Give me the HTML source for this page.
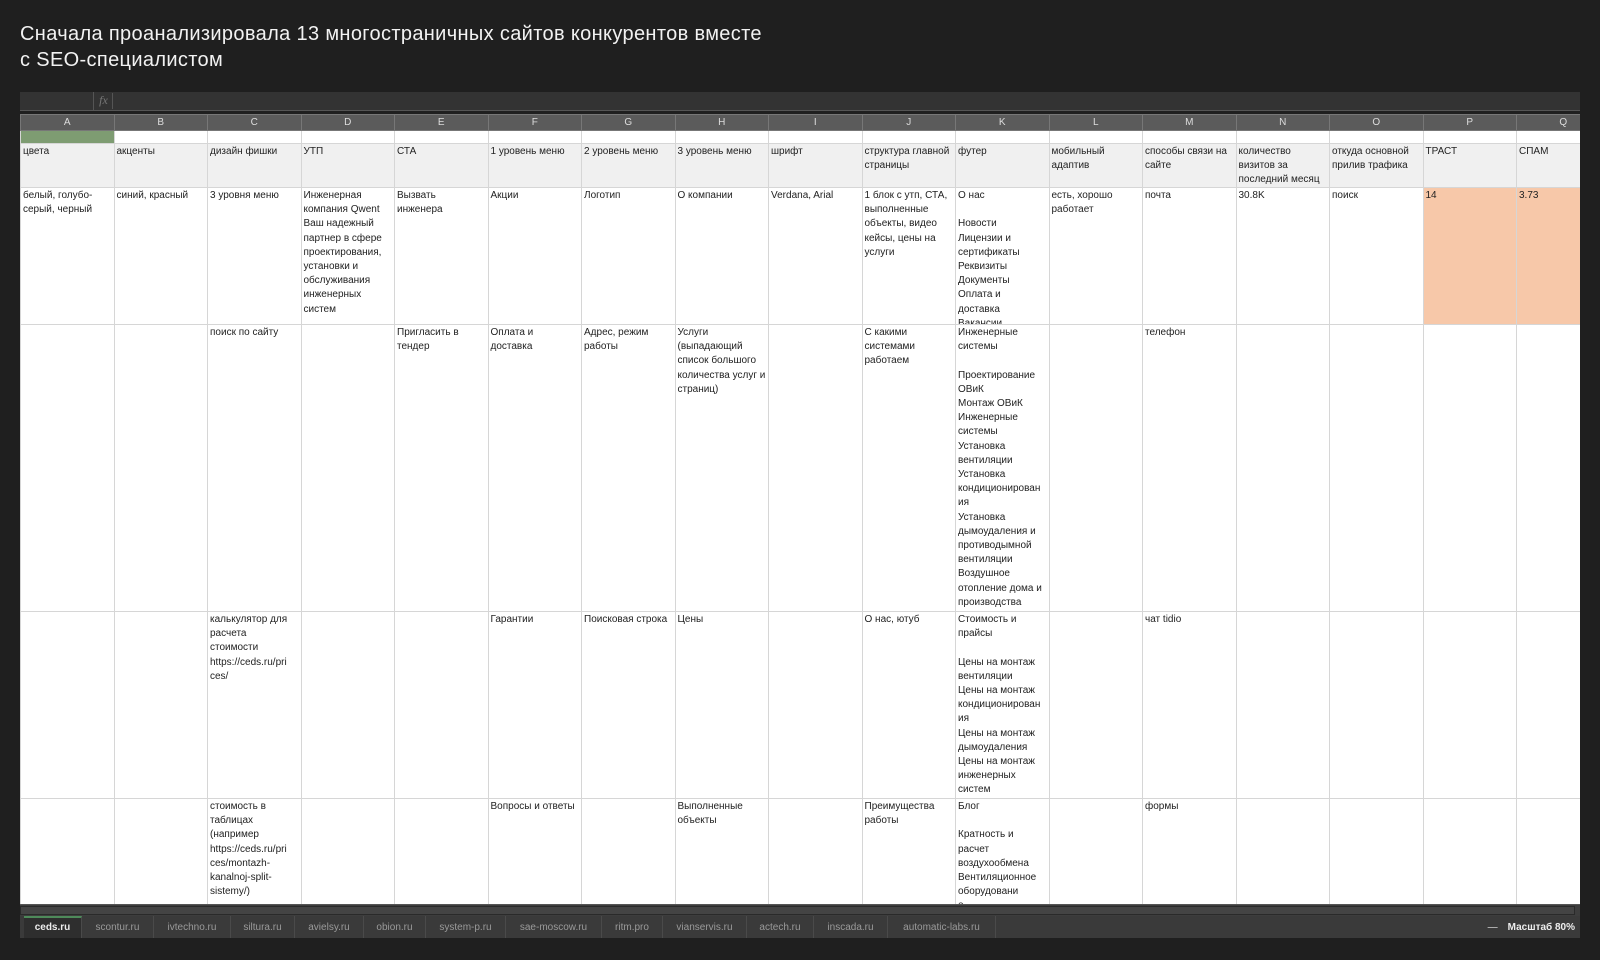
<!DOCTYPE html>
<html><head><meta charset="utf-8"><style>
*{margin:0;padding:0;box-sizing:border-box}
body{width:1600px;height:960px;background:#1f1f1f;position:relative;overflow:hidden;font-family:"Liberation Sans","DejaVu Sans",sans-serif}
.title{position:absolute;left:20px;top:21px;color:#f2f2f2;font-size:20px;line-height:26px;letter-spacing:0.35px}
.fbar{position:absolute;left:20px;top:92px;width:1560px;height:19px;background:#333;border-bottom:1px solid #555}
.nb{position:absolute;left:0;top:0;width:74px;height:18px;border-right:1px solid #555}
.fx{position:absolute;left:75px;top:1px;width:18px;height:16px;border-right:1px solid #555;color:#777;font:italic 12px "Liberation Serif",serif;text-align:center}
.sheet{position:absolute;left:20px;top:114px;width:1560px;height:790px;overflow:hidden;background:#fff}
table{border-collapse:collapse;table-layout:fixed;width:1589.5px}
td{width:93.5px;border:1px solid #d6d6d6;vertical-align:top;font-size:10px;line-height:14.2px;color:#222;padding:0;overflow:hidden}
td div{overflow:hidden;white-space:nowrap;padding:1px 0 0 2px}
tr.ch td{background:#5b5b5b;color:#ddd;text-align:center;height:16px;border-color:#777;font-size:10px;line-height:15px}
tr.r1 td{height:13px}
tr.r2 td{height:44px;background:#f0f0f0}tr.r2 td div{height:43px}
tr.r3 td{height:137px}tr.r3 td div{height:136px}
tr.r4 td{height:287px}tr.r4 td div{height:286px}
tr.r5 td{height:187px}tr.r5 td div{height:186px}
tr.r6 td{height:120px}tr.r6 td div{height:119px}
.pe{background:#f7c8a9!important}
.scroll{position:absolute;left:20px;top:904px;width:1560px;height:12px;background:#3d3d3d;border-top:1px solid #555}
.scroll i{position:absolute;left:0;top:1px;width:1555px;height:9px;background:#444;border:1px solid #2a2a2a}
.tabs{position:absolute;left:20px;top:916px;width:1560px;height:22px;background:#3a3a3a}
.tab{position:absolute;top:0;height:22px;border-right:1px solid #4a4a4a;color:#9a9a9a;font-size:10px;line-height:23px;text-align:center;background:#3a3a3a}
.tab.a{background:#2e2e2e;color:#eee;font-weight:bold;border-top:2px solid #4e8a5a;line-height:20px}
.zoom{position:absolute;right:25px;top:916px;color:#eee;font-size:10px;line-height:23px;font-weight:bold}
</style></head><body>
<div class="title">Сначала проанализировала 13 многостраничных сайтов конкурентов вместе<br>с SEO-специалистом</div>
<div class="fbar"><div class="nb"></div><div class="fx">fx</div></div>
<div class="sheet"><table>
<tr class="ch"><td>A</td><td>B</td><td>C</td><td>D</td><td>E</td><td>F</td><td>G</td><td>H</td><td>I</td><td>J</td><td>K</td><td>L</td><td>M</td><td>N</td><td>O</td><td>P</td><td>Q</td></tr>
<tr class="r1"><td style="background:#7e9c72"></td><td></td><td></td><td></td><td></td><td></td><td></td><td></td><td></td><td></td><td></td><td></td><td></td><td></td><td></td><td></td><td></td></tr>
<tr class="r2"><td><div>цвета</div></td><td><div>акценты</div></td><td><div>дизайн фишки</div></td><td><div>УТП</div></td><td><div>СТА</div></td><td><div>1 уровень меню</div></td><td><div>2 уровень меню</div></td><td><div>3 уровень меню</div></td><td><div>шрифт</div></td><td><div>структура главной<br>страницы</div></td><td><div>футер</div></td><td><div>мобильный<br>адаптив</div></td><td><div>способы связи на<br>сайте</div></td><td><div>количество<br>визитов за<br>последний месяц</div></td><td><div>откуда основной<br>прилив трафика</div></td><td><div>ТРАСТ</div></td><td><div>СПАМ</div></td></tr>
<tr class="r3"><td><div>белый, голубо-<br>серый, черный</div></td><td><div>синий, красный</div></td><td><div>3 уровня меню</div></td><td><div>Инженерная<br>компания Qwent<br>Ваш надежный<br>партнер в сфере<br>проектирования,<br>установки и<br>обслуживания<br>инженерных<br>систем</div></td><td><div>Вызвать<br>инженера</div></td><td><div>Акции</div></td><td><div>Логотип</div></td><td><div>О компании</div></td><td><div>Verdana, Arial</div></td><td><div>1 блок с утп, СТА,<br>выполненные<br>объекты, видео<br>кейсы, цены на<br>услуги</div></td><td><div>О нас<br><br>Новости<br>Лицензии и<br>сертификаты<br>Реквизиты<br>Документы<br>Оплата и<br>доставка<br>Вакансии</div></td><td><div>есть, хорошо<br>работает</div></td><td><div>почта</div></td><td><div>30.8K</div></td><td><div>поиск</div></td><td class="pe"><div>14</div></td><td class="pe"><div>3.73</div></td></tr>
<tr class="r4"><td></td><td></td><td><div>поиск по сайту</div></td><td></td><td><div>Пригласить в<br>тендер</div></td><td><div>Оплата и<br>доставка</div></td><td><div>Адрес, режим<br>работы</div></td><td><div>Услуги<br>(выпадающий<br>список большого<br>количества услуг и<br>страниц)</div></td><td></td><td><div>С какими<br>системами<br>работаем</div></td><td><div>Инженерные<br>системы<br><br>Проектирование<br>ОВиК<br>Монтаж ОВиК<br>Инженерные<br>системы<br>Установка<br>вентиляции<br>Установка<br>кондиционирован<br>ия<br>Установка<br>дымоудаления и<br>противодымной<br>вентиляции<br>Воздушное<br>отопление дома и<br>производства</div></td><td></td><td><div>телефон</div></td><td></td><td></td><td></td><td></td></tr>
<tr class="r5"><td></td><td></td><td><div>калькулятор для<br>расчета<br>стоимости<br>https://ceds.ru/pri<br>ces/</div></td><td></td><td></td><td><div>Гарантии</div></td><td><div>Поисковая строка</div></td><td><div>Цены</div></td><td></td><td><div>О нас, ютуб</div></td><td><div>Стоимость и<br>прайсы<br><br>Цены на монтаж<br>вентиляции<br>Цены на монтаж<br>кондиционирован<br>ия<br>Цены на монтаж<br>дымоудаления<br>Цены на монтаж<br>инженерных<br>систем</div></td><td></td><td><div>чат tidio</div></td><td></td><td></td><td></td><td></td></tr>
<tr class="r6"><td></td><td></td><td><div>стоимость в<br>таблицах<br>(например<br>https://ceds.ru/pri<br>ces/montazh-<br>kanalnoj-split-<br>sistemy/)</div></td><td></td><td></td><td><div>Вопросы и ответы</div></td><td></td><td><div>Выполненные<br>объекты</div></td><td></td><td><div>Преимущества<br>работы</div></td><td><div>Блог<br><br>Кратность и<br>расчет<br>воздухообмена<br>Вентиляционное<br>оборудовани<br>е</div></td><td></td><td><div>формы</div></td><td></td><td></td><td></td><td></td></tr>
</table></div>
<div class="scroll"><i></i></div>
<div class="tabs">
<div class="tab a" style="left:4px;width:58px">ceds.ru</div>
<div class="tab" style="left:62px;width:72px">scontur.ru</div>
<div class="tab" style="left:134px;width:77px">ivtechno.ru</div>
<div class="tab" style="left:211px;width:64px">siltura.ru</div>
<div class="tab" style="left:275px;width:69px">avielsy.ru</div>
<div class="tab" style="left:344px;width:62px">obion.ru</div>
<div class="tab" style="left:406px;width:80px">system-p.ru</div>
<div class="tab" style="left:486px;width:96px">sae-moscow.ru</div>
<div class="tab" style="left:582px;width:61px">ritm.pro</div>
<div class="tab" style="left:643px;width:84px">vianservis.ru</div>
<div class="tab" style="left:727px;width:67px">actech.ru</div>
<div class="tab" style="left:794px;width:74px">inscada.ru</div>
<div class="tab" style="left:868px;width:108px">automatic-labs.ru</div>
</div>
<div class="zoom"><span style="color:#aaa;margin-right:10px">—</span>Масштаб 80%</div>
</body></html>
